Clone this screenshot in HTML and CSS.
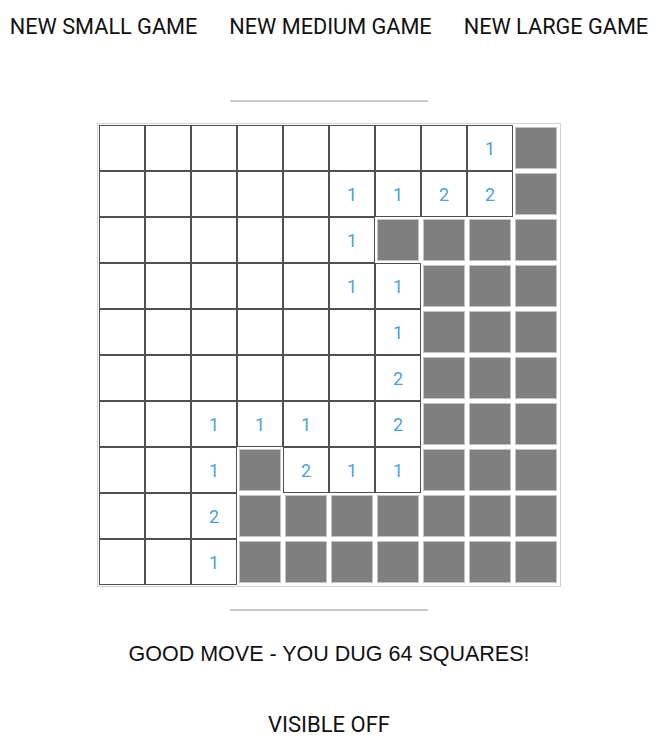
FILE: index.html
```html
<!DOCTYPE html>
<html>
<head>
<meta charset="utf-8">
<link rel="stylesheet" href="styles.css">
</head>
<body>
<nav class="menu">
  <button class="menu-btn">NEW SMALL GAME</button>
  <button class="menu-btn">NEW MEDIUM GAME</button>
  <button class="menu-btn">NEW LARGE GAME</button>
</nav>
<div class="rule rule-top"></div>
<div class="board">
  <div class="cell"></div><div class="cell"></div><div class="cell"></div><div class="cell"></div><div class="cell"></div><div class="cell"></div><div class="cell"></div><div class="cell"></div><div class="cell">1</div><div class="cell hidden"></div>
  <div class="cell"></div><div class="cell"></div><div class="cell"></div><div class="cell"></div><div class="cell"></div><div class="cell">1</div><div class="cell">1</div><div class="cell">2</div><div class="cell">2</div><div class="cell hidden"></div>
  <div class="cell"></div><div class="cell"></div><div class="cell"></div><div class="cell"></div><div class="cell"></div><div class="cell">1</div><div class="cell hidden"></div><div class="cell hidden"></div><div class="cell hidden"></div><div class="cell hidden"></div>
  <div class="cell"></div><div class="cell"></div><div class="cell"></div><div class="cell"></div><div class="cell"></div><div class="cell">1</div><div class="cell">1</div><div class="cell hidden"></div><div class="cell hidden"></div><div class="cell hidden"></div>
  <div class="cell"></div><div class="cell"></div><div class="cell"></div><div class="cell"></div><div class="cell"></div><div class="cell"></div><div class="cell">1</div><div class="cell hidden"></div><div class="cell hidden"></div><div class="cell hidden"></div>
  <div class="cell"></div><div class="cell"></div><div class="cell"></div><div class="cell"></div><div class="cell"></div><div class="cell"></div><div class="cell">2</div><div class="cell hidden"></div><div class="cell hidden"></div><div class="cell hidden"></div>
  <div class="cell"></div><div class="cell"></div><div class="cell">1</div><div class="cell">1</div><div class="cell">1</div><div class="cell"></div><div class="cell">2</div><div class="cell hidden"></div><div class="cell hidden"></div><div class="cell hidden"></div>
  <div class="cell"></div><div class="cell"></div><div class="cell">1</div><div class="cell hidden"></div><div class="cell">2</div><div class="cell">1</div><div class="cell">1</div><div class="cell hidden"></div><div class="cell hidden"></div><div class="cell hidden"></div>
  <div class="cell"></div><div class="cell"></div><div class="cell">2</div><div class="cell hidden"></div><div class="cell hidden"></div><div class="cell hidden"></div><div class="cell hidden"></div><div class="cell hidden"></div><div class="cell hidden"></div><div class="cell hidden"></div>
  <div class="cell"></div><div class="cell"></div><div class="cell">1</div><div class="cell hidden"></div><div class="cell hidden"></div><div class="cell hidden"></div><div class="cell hidden"></div><div class="cell hidden"></div><div class="cell hidden"></div><div class="cell hidden"></div>
</div>
<div class="rule rule-bottom"></div>
<p class="message">GOOD MOVE - YOU DUG 64 SQUARES!</p>
<p class="toggle">VISIBLE OFF</p>
</body>
</html>
```
FILE: styles.css
```css
html, body {
  margin: 0;
  padding: 0;
  background: #fff;
}
body {
  font-family: Roboto, "Liberation Sans", sans-serif;
  color: #111;
}
.menu {
  display: flex;
  justify-content: center;
  gap: 32px;
  padding-top: 14px;
}
.menu-btn {
  font-family: inherit;
  font-size: 21.7px;
  line-height: 26px;
  color: #111;
  background: none;
  border: 0;
  padding: 0;
  margin: 0;
  cursor: pointer;
}
.rule {
  width: 198px;
  height: 2px;
  background: #c8c8c8;
  margin-left: auto;
  margin-right: auto;
}
.rule-top {
  margin-top: 60px;
}
.board {
  width: 460px;
  margin: 21px auto 0;
  border: 1px solid #d2d2d2;
  padding: 1px;
  display: grid;
  grid-template-columns: repeat(10, 46px);
  grid-auto-rows: 46px;
}
.cell {
  box-sizing: border-box;
  border: 1px solid #505050;
  display: flex;
  align-items: center;
  justify-content: center;
  font-size: 18px;
  color: #4a9fe3;
  background: #fff;
}
.cell.hidden {
  border: 2px solid #fff;
  background: #7f7f7f;
  box-shadow: inset 0 0 0 1px #c4c4c4;
}
.rule-bottom {
  margin-top: 22px;
}
.message {
  margin: 30px 0 0;
  text-align: center;
  font-family: "Liberation Sans", Arial, sans-serif;
  font-size: 21.5px;
  line-height: 26px;
}
.toggle {
  margin: 45px 0 0;
  text-align: center;
  font-size: 22px;
  line-height: 26px;
}
```
